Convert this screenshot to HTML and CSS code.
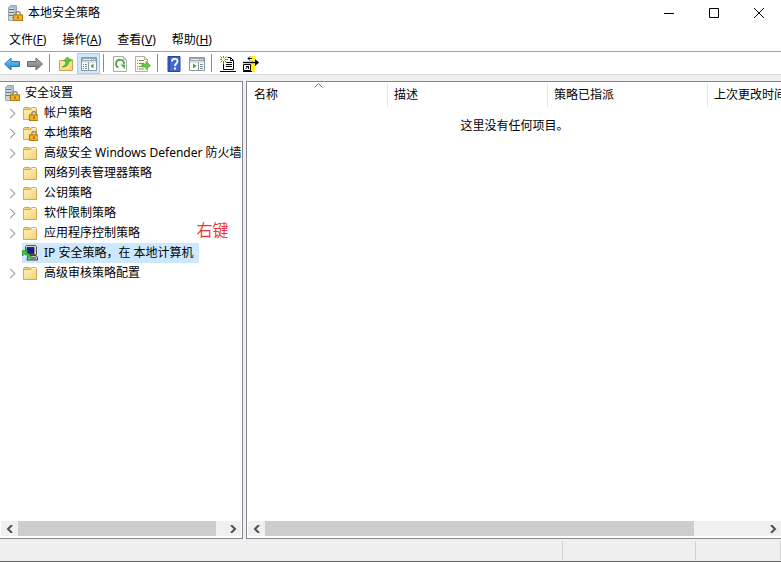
FILE: index.html
```html
<!DOCTYPE html>
<html lang="zh-CN">
<head>
  <meta charset="UTF-8" />
  <meta name="viewport" content="width=device-width, initial-scale=1" />
  <title>本地安全策略</title>
  <link rel="stylesheet" href="styles.css">
</head>
<body>
  <!-- shared icons -->
  <svg class="defs" aria-hidden="true">
    <linearGradient id="gold" x1="0" y1="0" x2="1" y2="1">
      <stop offset="0" stop-color="#fff0b4" />
      <stop offset="1" stop-color="#f3d37c" />
    </linearGradient>
    <linearGradient id="blue" x1="0" y1="0" x2="0" y2="1">
      <stop offset="0" stop-color="#7fd0f5" />
      <stop offset="1" stop-color="#1583cf" />
    </linearGradient>
    <linearGradient id="gray" x1="0" y1="0" x2="0" y2="1">
      <stop offset="0" stop-color="#b5b5b5" />
      <stop offset="1" stop-color="#737373" />
    </linearGradient>
    <symbol id="lock" viewBox="0 0 9 9">
      <path d="M2.5 4V2.5a2 2 0 0 1 4 0V4" fill="none" stroke="#8c8c84" stroke-width="1.3" />
      <rect x=".5" y="3.5" width="8" height="5" fill="#f5b324" stroke="#bd7a0c" />
      <path d="M4.5 5v2" stroke="#70480b" />
    </symbol>
    <symbol id="folder" viewBox="0 0 16 16">
      <path d="M1.5 3.5l1-1h5l1 1v1h-7z" fill="#f3d37c" stroke="#cda34a" />
      <path d="M1.5 4.5h7l1-2h4l1 1v11h-13z" fill="url(#gold)" stroke="#d1a954" />
      <path d="M10 3.5h3.5" stroke="#fffbe5" />
    </symbol>
    <symbol id="server" viewBox="0 0 16 16">
      <path d="M1.5 2.5l2-2h6v13l-2 2h-6z" fill="#aebdc7" stroke="#9aa8b2" />
      <path d="M2 3h5v12H2z" fill="#c9d6df" />
      <path d="M2 4.5h5M2 7.5h5M2 10.5h5" stroke="#647884" />
      <path d="M5 12.5h1" stroke="#51aa4f" />
      <use href="#lock" x="6" y="6" width="10" height="10" />
    </symbol>
    <symbol id="panel" viewBox="0 0 16 16">
      <path d="M.5 1.5h15v13H.5z" fill="#fff" stroke="#8a98a2" />
      <path d="M1 2h14v3H1z" fill="#99a8b4" />
      <path d="M2 3.5h8M11 3.5h1M13 3.5h1" stroke="#e9eff3" />
      <path d="M1 6h14" stroke="#b9c4cc" />
    </symbol>
  </svg>

  <div class="window">
    <header class="titlebar">
      <svg class="icon" viewBox="0 0 16 16"><use href="#server" /></svg>
      <h1 class="title">本地安全策略</h1>
      <div class="window-buttons">
        <button type="button" aria-label="最小化"><svg viewBox="0 0 12 12"><path d="M1 6.5h10" /></svg></button>
        <button type="button" aria-label="最大化"><svg viewBox="0 0 12 12"><path d="M1.5 1.5h9v9h-9z" /></svg></button>
        <button type="button" aria-label="关闭"><svg viewBox="0 0 12 12"><path d="M1 1l10 10M11 1L1 11" /></svg></button>
      </div>
    </header>

    <nav class="menubar">
      <button type="button">文件(<u>F</u>)</button>
      <button type="button">操作(<u>A</u>)</button>
      <button type="button">查看(<u>V</u>)</button>
      <button type="button">帮助(<u>H</u>)</button>
    </nav>

    <div class="toolbar">
      <button type="button" aria-label="后退">
        <svg class="icon" viewBox="0 0 16 16"><path d="M.5 8l6.5-6v3.5h8.5v5H7V14z" fill="url(#blue)" stroke="#2679ae" /></svg>
      </button>
      <button type="button" aria-label="前进">
        <svg class="icon" viewBox="0 0 16 16"><path d="M15.5 8L9 2v3.5H.5v5H9V14z" fill="url(#gray)" stroke="#6b6b6b" /></svg>
      </button>
      <span class="divider"></span>
      <button type="button" aria-label="上移">
        <svg class="icon" viewBox="0 0 16 16">
          <path d="M1.5 4.5h5l1 1h3l1-2h3v11h-13z" fill="url(#gold)" stroke="#cfa34b" />
          <path d="M4 11c3-1 4-3 4-6H5.5L9.5 1l4 4H11c0 4-3 6-7 6z" fill="#5bc936" stroke="#38a11f" stroke-width=".7" />
        </svg>
      </button>
      <button type="button" class="active" aria-label="显示/隐藏控制台树">
        <svg class="icon" viewBox="0 0 16 16">
          <use href="#panel" />
          <path d="M7.5 6v8" stroke="#8a98a2" />
          <path d="M2 8.5h1M4 8.5h2M2 10.5h1M4 10.5h2M2 12.5h1M4 12.5h2" stroke="#6e8292" />
          <path d="M12.5 7.5v5L9.5 10z" fill="#42a836" />
        </svg>
      </button>
      <span class="divider"></span>
      <button type="button" aria-label="刷新">
        <svg class="icon" viewBox="0 0 16 16">
          <path d="M1.5.5h10l3 3v12h-13z" fill="#fafafa" stroke="#aaa" />
          <path d="M11.5.5v3h3" fill="none" stroke="#bbb" />
          <path d="M6.5 11.5A4 4 0 1 1 12 8" fill="none" stroke="#4bab45" stroke-width="1.8" />
          <path d="M8.500 8.500h4.500v4.500z" fill="#4bab45" />
        </svg>
      </button>
      <button type="button" aria-label="导出列表">
        <svg class="icon" viewBox="0 0 16 16">
          <path d="M.5.5h9l3 3v12H.5z" fill="#fffbea" stroke="#b7b09a" />
          <path d="M9.5.5v3h3" fill="none" stroke="#b7b09a" />
          <path d="M2 4.5h1M2 7.5h1M2 10.5h1M2 13h1M4 4.5h5M4 7.5h5M4 10.5h3M4 13h5" stroke="#8b7f94" />
          <path d="M7 8h4V5.5l4.500 4-4.500 4V11H7z" fill="#67cc45" stroke="#45ad2b" stroke-width=".7" />
        </svg>
      </button>
      <span class="divider"></span>
      <button type="button" aria-label="帮助">
        <svg class="icon" viewBox="0 0 16 16">
          <path d="M2 .5h12v15H2z" fill="#4269cb" stroke="#27469a" />
          <path d="M3.5 1v14" stroke="#2b4fae" />
          <path d="M6 5.5c0-3.500 5.500-3.300 5.500-.2C11.500 7.500 9 7.500 9 10" fill="none" stroke="#fff" stroke-width="1.8" />
          <path d="M8 11.5h2v2H8z" fill="#fff" />
        </svg>
      </button>
      <button type="button" aria-label="显示/隐藏操作窗格">
        <svg class="icon" viewBox="0 0 16 16">
          <use href="#panel" />
          <path d="M9.5 6v8" stroke="#8a98a2" />
          <path d="M11 8.5h3M11 10.5h3M11 12.5h3" stroke="#7d909d" />
          <path d="M4 7.5v5L7.5 10z" fill="#42a836" />
        </svg>
      </button>
      <span class="divider"></span>
      <button type="button" aria-label="创建 IP 安全策略">
        <svg class="icon" viewBox="0 0 16 16">
          <path d="M3.5 6v7.500h10v-9l-3-3H7.500" fill="#fff" stroke="#000" />
          <path d="M10.500 1.500v3h3M6 6.500h6M6 8.500h6M6 10.500h6M0 15.500h16" fill="none" stroke="#000" />
          <path d="M3.5 0v2M3.5 5v3M0 3.500h2M5 3.500h3M.5.5l2 2M6.500.5l-2 2M.5 6.500l2-2M6.500 6.500l-2-2" stroke="#85870c" />
        </svg>
      </button>
      <button type="button" aria-label="管理 IP 筛选器">
        <svg class="icon" viewBox="0 0 16 16">
          <path d="M8 0h4v16H8z" fill="#fff21a" />
          <path d="M0 6.500h15" stroke="#000" stroke-width="1.400" />
          <path d="M12 3l4 3.500-4 3.500z" />
          <path d="M.5 8.500h7v6h-7zM0 15.500h9M5 2.500h4M7 .5l-2 2 2 2" fill="none" stroke="#000" />
          <path d="M2.500 13l3-3M3 10.500h2.500V13" fill="none" stroke="#000" />
        </svg>
      </button>
    </div>

    <main class="panes">
      <section class="pane tree-pane">
        <ul class="tree">
          <li><svg class="icon" viewBox="0 0 16 16"><use href="#server" /></svg><span class="label">安全设置</span></li>
          <li>
            <button type="button" class="toggle" aria-label="展开"></button>
            <svg class="icon" viewBox="0 0 16 16"><use href="#folder" /><use href="#lock" x="7" y="6" width="10" height="10" /></svg>
            <span class="label">帐户策略</span>
          </li>
          <li>
            <button type="button" class="toggle" aria-label="展开"></button>
            <svg class="icon" viewBox="0 0 16 16"><use href="#folder" /><use href="#lock" x="7" y="6" width="10" height="10" /></svg>
            <span class="label">本地策略</span>
          </li>
          <li>
            <button type="button" class="toggle" aria-label="展开"></button>
            <svg class="icon" viewBox="0 0 16 16"><use href="#folder" /></svg>
            <span class="label">高级安全 Windows Defender 防火墙</span>
          </li>
          <li class="leaf">
            <svg class="icon" viewBox="0 0 16 16"><use href="#folder" /></svg>
            <span class="label">网络列表管理器策略</span>
          </li>
          <li>
            <button type="button" class="toggle" aria-label="展开"></button>
            <svg class="icon" viewBox="0 0 16 16"><use href="#folder" /></svg>
            <span class="label">公钥策略</span>
          </li>
          <li>
            <button type="button" class="toggle" aria-label="展开"></button>
            <svg class="icon" viewBox="0 0 16 16"><use href="#folder" /></svg>
            <span class="label">软件限制策略</span>
          </li>
          <li>
            <button type="button" class="toggle" aria-label="展开"></button>
            <svg class="icon" viewBox="0 0 16 16"><use href="#folder" /></svg>
            <span class="label">应用程序控制策略</span>
          </li>
          <li class="leaf">
            <div class="selected">
              <svg class="icon" viewBox="0 0 16 16">
                <path d="M3.5 1.5l1-1h9l1 1v8h-11z" fill="#d5d2c8" stroke="#55544f" />
                <path d="M5 2.5h7v6H5z" fill="#17208f" stroke="#000" stroke-width=".6" />
                <path d="M6 10.5h8l1.5 2v2.5H5z" fill="#c9c6bb" stroke="#3b3b38" />
                <path d="M10 13h4" stroke="#333" />
                <path d="M.5 5.5h5.500L4.500 7l6 6L9 14.500l-6-6L.5 11z" fill="#31d431" stroke="#168d20" stroke-width=".7" />
              </svg>
              <span class="label">IP 安全策略，在 本地计算机</span>
              <span class="note">右键</span>
            </div>
          </li>
          <li>
            <button type="button" class="toggle" aria-label="展开"></button>
            <svg class="icon" viewBox="0 0 16 16"><use href="#folder" /></svg>
            <span class="label">高级审核策略配置</span>
          </li>
        </ul>
        <div class="scrollbar">
          <button type="button" aria-label="向左滚动"><svg viewBox="0 0 8 8"><path d="M6 0L2 4l4 4" /></svg></button>
          <div class="track"><div class="thumb"></div></div>
          <button type="button" aria-label="向右滚动"><svg viewBox="0 0 8 8"><path d="M2 0l4 4-4 4" /></svg></button>
        </div>
      </section>

      <section class="pane list-pane">
        <div class="list">
          <table>
            <thead>
              <tr>
                <th class="name">名称<svg class="sort" viewBox="0 0 9 5"><path d="M.5 4.5l4-4 4 4" /></svg></th>
                <th>描述</th>
                <th>策略已指派</th>
                <th class="modified">上次更改时间</th>
              </tr>
            </thead>
            <tbody>
              <tr><td colspan="4">这里没有任何项目。</td></tr>
            </tbody>
          </table>
        </div>
        <div class="scrollbar">
          <button type="button" aria-label="向左滚动"><svg viewBox="0 0 8 8"><path d="M6 0L2 4l4 4" /></svg></button>
          <div class="track"><div class="thumb"></div></div>
          <button type="button" aria-label="向右滚动"><svg viewBox="0 0 8 8"><path d="M2 0l4 4-4 4" /></svg></button>
        </div>
      </section>
    </main>

    <footer class="statusbar"><span></span><span></span><span></span></footer>
  </div>
</body>
</html>
```
FILE: styles.css
```css
* {
  box-sizing: border-box;
}
body {
  margin: 0;
  background: #fff;
  color: #000;
  font-family: "Noto Sans", "Noto Sans CJK SC", sans-serif;
  font-size: 12px;
  line-height: 20px;
}
button {
  padding: 0;
  border: none;
  background: none;
  color: inherit;
  font: inherit;
}
.defs {
  position: absolute;
  width: 0;
  height: 0;
}
.icon {
  display: block;
  flex: none;
  width: 16px;
  height: 16px;
}
.window {
  display: flex;
  flex-direction: column;
  height: 100vh;
  overflow: hidden;
  border-bottom: 1px solid #666;
}

/* title and menu */
.titlebar {
  display: flex;
  align-items: center;
  flex: none;
  height: 25px;
  padding-left: 7px;
  gap: 5px;
}
.title {
  flex: 1;
  margin: 0;
  font-size: 12px;
  font-weight: normal;
}
.window-buttons {
  display: flex;
}
.window-buttons button {
  display: grid;
  place-items: center;
  width: 45px;
  height: 24px;
}
.window-buttons svg {
  width: 12px;
  height: 12px;
  fill: none;
  stroke: #000;
}
.menubar {
  display: flex;
  flex: none;
  gap: 16px;
  height: 27px;
  padding: 5px 9px 0;
  border-bottom: 1px solid #a0a0a0;
}
.menubar button {
  height: 20px;
}

/* toolbar */
.toolbar {
  display: flex;
  align-items: flex-end;
  flex: none;
  height: 23px;
  border-bottom: 1px solid #d9d9d9;
}
.toolbar button {
  display: grid;
  place-items: center;
  width: 23px;
  height: 21px;
}
.toolbar .active {
  background: #cce8ff;
  border: 1px solid #99d1ff;
}
.divider {
  width: 8px;
  height: 20px;
  background: linear-gradient(#8c8c8c, #8c8c8c) 3px 0 / 1px 18px no-repeat;
}

/* panes */
.panes {
  display: grid;
  grid-template-columns: 243px 1fr;
  gap: 3px;
  flex: 1;
  min-height: 0;
  padding-top: 6px;
  background: #efefef;
}
.pane {
  display: flex;
  flex-direction: column;
  min-width: 0;
  overflow: hidden;
  background: #fff;
  border: 1px solid #828790;
  padding: 1px 1px 2px;
}
.tree-pane {
  border-left: none;
}
.list-pane {
  border-right: none;
  padding-right: 0;
}
.tree {
  flex: 1;
  min-height: 0;
  margin: 0;
  padding: 0;
  list-style: none;
  white-space: nowrap;
  overflow: hidden;
}
.tree li {
  display: flex;
  align-items: center;
  height: 20px;
  padding-left: 3px;
}
.tree .leaf {
  padding-left: 21px;
}
.tree .label {
  padding-left: 6px;
}
.tree > li:first-child .label {
  padding-left: 5px;
}
.toggle {
  display: flex;
  align-items: center;
  flex: none;
  width: 18px;
  height: 20px;
  padding-left: 3px;
}
.toggle::before {
  content: "";
  width: 6px;
  height: 6px;
  border: solid #999;
  border-width: 1px 1px 0 0;
  transform: rotate(45deg);
}
.selected {
  position: relative;
  display: flex;
  align-items: center;
  height: 20px;
  padding-right: 5px;
  background: #cce8ff;
}
.note {
  position: absolute;
  left: 100%;
  bottom: 100%;
  margin: 0 0 3px -2px;
  color: #f03a3a;
  font-size: 16px;
}

/* result list */
.list {
  flex: 1;
  min-height: 0;
  overflow: hidden;
}
table {
  width: 100%;
  table-layout: fixed;
  border-collapse: separate;
  border-spacing: 0;
}
th {
  position: relative;
  width: 160px;
  height: 24px;
  padding: 0 0 0 6px;
  border-right: 1px solid #e2e8ee;
  font-weight: normal;
  text-align: left;
  white-space: nowrap;
}
th.name {
  width: 140px;
}
th.modified {
  width: auto;
  border-right: none;
}
.sort {
  position: absolute;
  top: 0;
  left: calc(50% - 4px);
  width: 9px;
  height: 5px;
  fill: none;
  stroke: #666;
}
td {
  padding: 9px 0 0;
  text-align: center;
}

/* scrollbars */
.scrollbar {
  display: flex;
  flex: none;
  height: 15px;
  background: #f0f0f0;
}
.scrollbar button {
  display: grid;
  place-items: center;
  width: 17px;
  height: 15px;
}
.scrollbar svg {
  width: 8px;
  height: 8px;
  fill: none;
  stroke: #505050;
  stroke-width: 2px;
}
.track {
  flex: 1;
}
.thumb {
  height: 100%;
  background: #cdcdcd;
}
.tree-pane .thumb {
  width: 96%;
}
.list-pane .thumb {
  width: 86%;
}

/* status bar */
.statusbar {
  display: grid;
  grid-template-columns: 1fr 133px 85px;
  flex: none;
  height: 22px;
  padding-top: 2px;
  background: #efefef;
}
.statusbar span {
  height: 19px;
  border-right: 1px solid #d2d2d2;
}
```
